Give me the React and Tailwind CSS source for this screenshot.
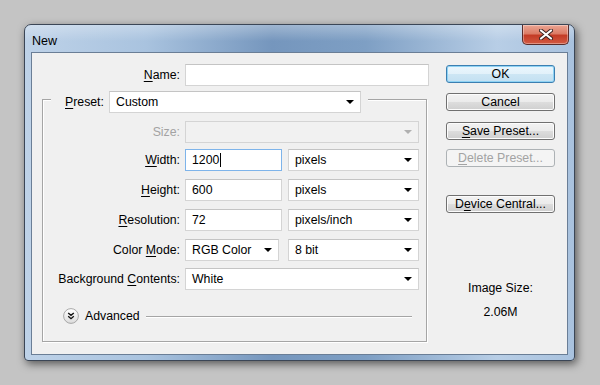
import clsx from 'clsx';

// small black dropdown arrow
function Arrow({ color = '#000' }) {
  return (
    <svg width="8" height="4" viewBox="0 0 8 4" className="shrink-0">
      <path d="M0 0h8L4 4z" fill={color} />
    </svg>
  );
}

function Field({ value, className, focused, cursor }) {
  return (
    <div
      className={clsx(
        'flex items-center h-[22px] pl-[6px] bg-white border',
        focused ? 'border-[#7eb4ea]' : 'border-[#d4d4d4] border-t-[#c4c4c4]',
        className
      )}
    >
      <span>{value}</span>
      {cursor && <span className="w-px h-[14px] bg-black ml-px" />}
    </div>
  );
}

function Select({ value, className, disabled }) {
  return (
    <div
      className={clsx(
        'flex items-center justify-between h-[22px] pl-[6px] pr-[6px] border',
        disabled ? 'bg-[#f1f1f1] border-[#d4d4d4]' : 'bg-white border-[#d4d4d4] border-t-[#c4c4c4]',
        className
      )}
    >
      <span>{value}</span>
      <Arrow color={disabled ? '#b0b0b0' : '#000'} />
    </div>
  );
}

function Row({ label, k, disabled, className, children }) {
  const i = k ? label.indexOf(k) : -1;
  return (
    <div className={clsx('flex items-center', className)}>
      <div className={clsx('w-[138px] text-right pr-px', disabled && 'text-[#a3a3a3]')}>
        {i >= 0 ? (
          <>
            {label.slice(0, i)}
            <u className="underline-offset-2">{k}</u>
            {label.slice(i + 1)}
          </>
        ) : (
          label
        )}
        :
      </div>
      <div className="ml-[4px] flex gap-[6px]">{children}</div>
    </div>
  );
}

function Button({ children, primary, disabled, className }) {
  return (
    <div
      className={clsx(
        'h-[18px] w-[109px] rounded-[3px] border flex items-center justify-center',
        primary
          ? 'border-[#3c7fb1] shadow-[inset_0_0_0_1px_#8fd3f4] bg-[linear-gradient(#eaf6fd,#e2f1fa_50%,#cde6f4_51%,#c3e0f2)]'
          : disabled
          ? 'border-[#adb2b5] bg-[#f4f4f4] text-[#a3a3a3]'
          : 'border-[#707070] shadow-[inset_0_0_0_1px_#fcfcfc] bg-[linear-gradient(#f2f2f2,#ebebeb_50%,#dddddd_51%,#cfcfcf)]',
        className
      )}
    >
      {children}
    </div>
  );
}

export default function App() {
  return (
    <div className="w-[600px] h-[385px] overflow-hidden bg-[#c4c4c4] pl-[24px] pt-[24px] font-['Liberation_Sans',Arial,sans-serif] text-[12.3px] text-black leading-none">
      {/* window */}
      <div className="w-[551px] h-[337px] rounded-t-[7px] rounded-b-[4px] border border-[#3b4656] shadow-[2px_3px_9px_rgba(0,0,0,0.55)] bg-[linear-gradient(90deg,#bed2e8,#a9c3df_22%,#7596bd_45%,#7e9fc4_62%,#b8cee6_86%,#a9c2de)] flex flex-col">
        {/* title bar */}
        <div className="h-[27px] flex items-start bg-[linear-gradient(rgba(255,255,255,0.3),rgba(255,255,255,0)_60%)] rounded-t-[6px]">
          <span className="ml-[7px] mt-[10px] text-[12.5px]">New</span>
          <div className="ml-auto mr-[5px] w-[47px] h-[20px] rounded-b-[5px] border border-t-0 border-[#5a2c2a] bg-[linear-gradient(#eba593,#dc7c66_45%,#c43c26_55%,#d25a42)] shadow-[inset_0_0_0_1px_rgba(255,255,255,0.35)] flex items-center justify-center">
            <svg width="14" height="11" viewBox="0 0 14 11">
              <path d="M2 1.5l10 8M12 1.5l-10 8" stroke="#3a2220" strokeWidth="4" strokeLinecap="round" />
              <path d="M2 1.5l10 8M12 1.5l-10 8" stroke="#fff" strokeWidth="2.2" strokeLinecap="round" />
            </svg>
          </div>
        </div>

        {/* client area */}
        <div className="mx-[6px] h-[303px] border border-[#6a7e96] bg-[#f0f0f0] flex pl-[11px]">
          {/* form column */}
          <div className="w-[386px] pt-[11px] flex flex-col">
            <div className="flex items-center">
              <div className="w-[138px] text-right pr-px">
                <u className="underline-offset-2">N</u>ame:
              </div>
              <Field value="" className="ml-[4px] w-[244px] h-[21px]" />
            </div>

            {/* group box */}
            <div className="mt-[13px] -ml-px w-[385px] h-[243px] border border-[#a5a5a5] shadow-[inset_1px_1px_0_#fff,1px_1px_0_#fff] flex flex-col">
              <div className="-mt-[9px] ml-[8px] self-start bg-[#f0f0f0] pl-[14px] pr-[7px] flex items-center">
                <span className="w-[38px]">
                  <u className="underline-offset-2">P</u>reset:
                </span>
                <Select value="Custom" className="ml-[6px] w-[252px] h-[21px]" />
              </div>

              <Row label="Size" disabled className="mt-[8px]">
                <Select value="" disabled className="w-[234px] h-[20px]" />
              </Row>
              <Row label="Width" k="W" className="mt-[6px]">
                <Field value="1200" focused cursor className="w-[97px]" />
                <Select value="pixels" className="w-[131px]" />
              </Row>
              <Row label="Height" k="H" className="mt-[8px]">
                <Field value="600" className="w-[97px]" />
                <Select value="pixels" className="w-[131px]" />
              </Row>
              <Row label="Resolution" k="R" className="mt-[8px]">
                <Field value="72" className="w-[97px]" />
                <Select value="pixels/inch" className="w-[131px]" />
              </Row>
              <Row label="Color Mode" k="M" className="mt-[8px]">
                <Select value="RGB Color" className="w-[94px] h-[21px]" />
                <Select value="8 bit" className="ml-[3px] w-[131px] h-[21px]" />
              </Row>
              <Row label="Background Contents" k="C" className="mt-[7px]">
                <Select value="White" className="w-[234px] h-[21px]" />
              </Row>

              <div className="mt-[18px] ml-[20px] flex items-center">
                <svg width="16" height="16" viewBox="0 0 16 16">
                  <defs>
                    <linearGradient id="adv" x1="0" y1="0" x2="0" y2="1">
                      <stop offset="0" stopColor="#ffffff" />
                      <stop offset="1" stopColor="#dcdcdc" />
                    </linearGradient>
                  </defs>
                  <circle cx="8" cy="8" r="7.4" fill="url(#adv)" stroke="#a8a8a8" strokeWidth="1" />
                  <path d="M5.2 5l2.8 2.4L10.8 5M5.2 8.3l2.8 2.4 2.8-2.4" fill="none" stroke="#111" strokeWidth="1.4" />
                </svg>
                <span className="ml-[6px]">Advanced</span>
                <div className="ml-[6px] w-[266px] h-px bg-[#a5a5a5] shadow-[0_1px_0_#fff]" />
              </div>
            </div>
          </div>

          {/* buttons column */}
          <div className="ml-[17px] w-[109px] pt-[12px] flex flex-col">
            <Button primary>OK</Button>
            <Button className="mt-[10px]">Cancel</Button>
            <Button className="mt-[11px]">
              <span>
                <u className="underline-offset-2">S</u>ave Preset...
              </span>
            </Button>
            <Button disabled className="mt-[9px]">
              <span>
                <u className="underline-offset-2">D</u>elete Preset...
              </span>
            </Button>
            <Button className="mt-[28px]">
              <span>
                D<u className="underline-offset-2">e</u>vice Central...
              </span>
            </Button>
            <div className="mt-[69px] text-center">Image Size:</div>
            <div className="mt-[12px] text-center">2.06M</div>
          </div>
        </div>
      </div>
    </div>
  );
}
